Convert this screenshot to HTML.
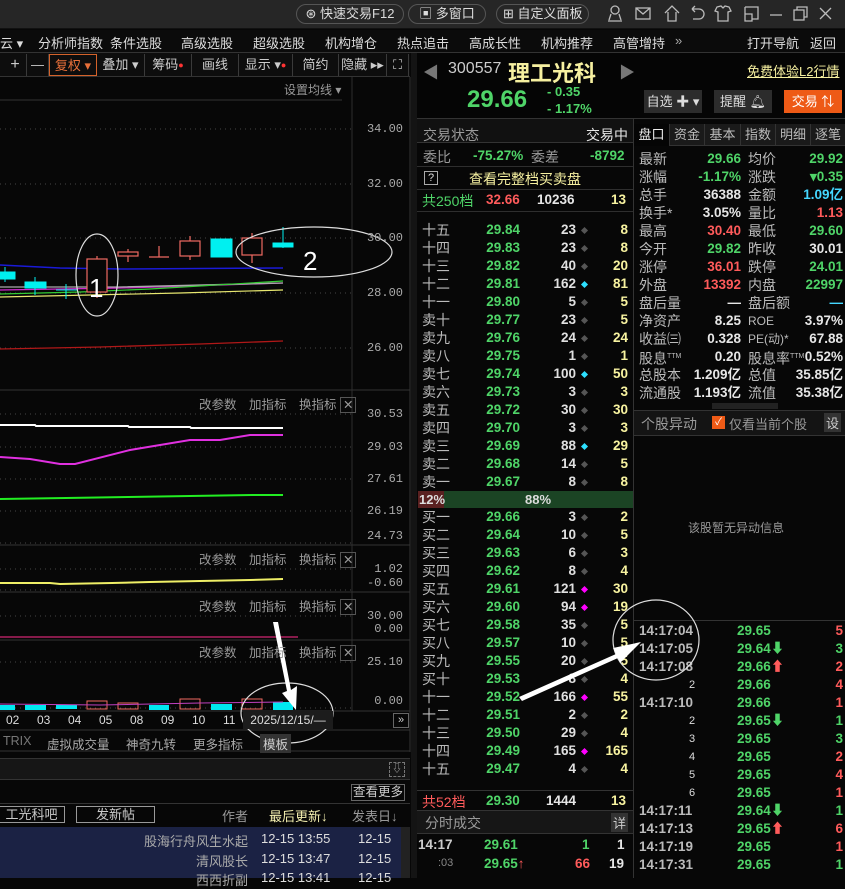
<!DOCTYPE html>
<html><head><meta charset="utf-8">
<style>
*{margin:0;padding:0;box-sizing:border-box}
body{width:845px;height:878px;background:#070707;overflow:hidden;position:relative;font-family:"Liberation Sans","Noto Sans CJK SC",sans-serif;font-size:13px;color:#ddd}
.a{position:absolute;white-space:nowrap}
.g{color:#4fd468}.r{color:#ff5b5b}.y{color:#f8f3a0}.w{color:#e6e6e6}.gr{color:#9a9a9a}.c{color:#45d7ff}
.n{font-weight:bold;font-size:13.5px}
.pill{position:absolute;top:4px;height:20px;border:1px solid #555;border-radius:10px;color:#ddd;font-size:13px;line-height:18px;padding:0 6px;white-space:nowrap;text-align:center}
.tb{position:absolute;top:54px;height:22px;border-right:1px solid #3a3a3a;line-height:22px;text-align:center;color:#ccc;white-space:nowrap}
.ib{position:absolute;font-size:12px;color:#999;white-space:nowrap}
.ax{position:absolute;font-size:12px;color:#aaa;right:442px;font-family:"Liberation Mono",monospace}
.ob{position:absolute;left:418px;width:214px;height:18px;line-height:18px}
.ob span{position:absolute}
.ob .l{left:4px;color:#bbb;font-size:14px}
.ob .p{right:112px;color:#4fd468;font-weight:bold;font-size:13.5px}
.ob .v{right:56px;color:#e0e0e0;font-weight:bold;font-size:13.5px}
.ob .d{left:164px;top:7px;width:5px;height:5px;transform:rotate(45deg);background:#555}
.ob .cn{right:4px;color:#f8f3a0;font-weight:bold;font-size:13.5px}
.st{position:absolute;left:634px;width:211px;height:18px;line-height:18px}
.st span{position:absolute;white-space:nowrap}
.st .l1{left:5px;color:#bbb;font-size:14px}.st .v1{right:104px;font-weight:bold;font-size:13.5px}
.st .l2{left:114px;color:#bbb;font-size:14px}.st .v2{right:2px;font-weight:bold;font-size:13.5px}
.tl{position:absolute;left:634px;width:211px;height:18px;line-height:18px;font-weight:bold;font-size:13.5px}
.tl span{position:absolute;white-space:nowrap}
.tl .t{left:5px;color:#bbb}.tl .tp{left:103px;color:#4fd468}.tl .k{right:2px}
.hl{position:absolute;height:1px;background:#2e2e2e}
.vl{position:absolute;width:1px;background:#2e2e2e}
</style></head><body>
<div class="a" style="left:0;top:0;width:845px;height:29px;background:#262626;border-bottom:1px solid #111"></div>
<div class="pill" style="left:296px;width:108px">⊛ 快速交易F12</div>
<div class="pill" style="left:408px;width:78px">▣ 多窗口</div>
<div class="pill" style="left:496px;width:93px">⊞ 自定义面板</div>
<svg class="a" style="left:600px;top:2px" width="245" height="24" fill="none" stroke="#bbb" stroke-width="1.3">
<circle cx="15" cy="8" r="4"/><path d="M8 19h14M11 12l-2 6M19 12l2 6"/>
<rect x="36" y="6" width="14" height="11"/><path d="M36 6l7 6 7-6"/>
<path d="M65 11l7-7 7 7M68 10v9h8v-9"/>
<path d="M92 7h7a5 5 0 010 10h-6M92 7l3-3M92 7l3 3"/>
<path d="M117 5l4-1 2 2 2-2 4 1 2 4-3 1v9h-10v-9l-3-1z"/>
<path d="M145 5h13v12h-6M145 5v14h7v-7h-7"/>
<path d="M170 13h12"/>
<rect x="194" y="8" width="10" height="10"/><path d="M197 8V5h10v10h-3"/>
<path d="M220 6l11 11M231 6l-11 11"/>
</svg>
<div class="a" style="left:0;top:30px;width:845px;height:23px;background:#0b0b0b;border-bottom:1px solid #333"></div>
<div class="a" style="top:33px;left:0;font-size:13px;color:#ddd">
<span class="a" style="left:0">云 ▾</span><span class="a" style="left:38px">分析师指数</span><span class="a" style="left:110px">条件选股</span><span class="a" style="left:181px">高级选股</span><span class="a" style="left:253px">超级选股</span><span class="a" style="left:325px">机构增仓</span><span class="a" style="left:397px">热点追击</span><span class="a" style="left:469px">高成长性</span><span class="a" style="left:541px">机构推荐</span><span class="a" style="left:613px">高管增持</span><span class="a" style="left:675px;color:#aaa">»</span><span class="a" style="left:747px">打开导航</span><span class="a" style="left:810px">返回</span></div>
<div class="a" style="left:0;top:53px;width:410px;height:24px;background:#0d0d0d;border-bottom:1px solid #333"></div>
<div class="tb" style="left:4px;width:23px;font-size:16px">+</div>
<div class="tb" style="left:27px;width:22px">—</div>
<div class="tb" style="left:49px;width:48px;border:1px solid #d4622a;color:#e8703a">复权 ▾</div>
<div class="tb" style="left:97px;width:48px">叠加 ▾</div>
<div class="tb" style="left:145px;width:47px">筹码<span style="color:#f33;font-size:9px;vertical-align:top">●</span></div>
<div class="tb" style="left:192px;width:47px">画线</div>
<div class="tb" style="left:239px;width:54px">显示 ▾<span style="color:#f33;font-size:9px;vertical-align:top">●</span></div>
<div class="tb" style="left:293px;width:46px">简约</div>
<div class="tb" style="left:339px;width:48px">隐藏 ▸▸</div>
<div class="tb" style="left:387px;width:22px">⛶</div>
<svg class="a" style="left:0;top:77px" width="412" height="675">
<g transform="translate(0,-77)">
<line x1="0" y1="100" x2="342" y2="100" stroke="#333"/>
<line x1="352" y1="77" x2="352" y2="711" stroke="#2c2c2c"/>
<line x1="410" y1="53" x2="410" y2="878" stroke="#333"/>
<g stroke="#444" stroke-dasharray="1 4">
<line x1="0" y1="129" x2="352" y2="129"/><line x1="0" y1="184" x2="352" y2="184"/><line x1="0" y1="238" x2="352" y2="238"/><line x1="0" y1="293" x2="352" y2="293"/><line x1="0" y1="348" x2="352" y2="348"/>
<line x1="0" y1="414" x2="352" y2="414"/><line x1="0" y1="447" x2="352" y2="447"/><line x1="0" y1="479" x2="352" y2="479"/><line x1="0" y1="511" x2="352" y2="511"/><line x1="0" y1="543" x2="352" y2="543"/>
<line x1="0" y1="569" x2="352" y2="569"/><line x1="0" y1="590" x2="352" y2="590"/>
<line x1="0" y1="616" x2="352" y2="616"/><line x1="0" y1="662" x2="352" y2="662"/><line x1="0" y1="708" x2="352" y2="708"/>
</g>
<g stroke="#333"><line x1="0" y1="390" x2="410" y2="390"/><line x1="0" y1="545" x2="410" y2="545"/><line x1="0" y1="592" x2="410" y2="592"/><line x1="0" y1="640" x2="410" y2="640"/><line x1="0" y1="711" x2="410" y2="711"/><line x1="0" y1="730" x2="410" y2="730"/><line x1="0" y1="751" x2="410" y2="751"/></g>
<polyline points="0,265 40,267 60,268 120,269 283,268" stroke="#1a1ad8" stroke-width="1.5" fill="none"/>
<polyline points="0,290 120,288 190,286 283,283" stroke="#d028d0" stroke-width="1.3" fill="none"/>
<polyline points="0,287 90,287 120,287 283,283" stroke="#aaa" stroke-width="1.3" fill="none"/>
<polyline points="0,294 80,292 150,289 283,281" stroke="#3c3" stroke-width="1.2" fill="none"/>
<polyline points="0,297 90,295 180,293 283,290" stroke="#e8e870" stroke-width="1.2" fill="none"/>
<polyline points="0,349 100,347 200,344 283,341" stroke="#b01818" stroke-width="1.3" fill="none"/>
<g fill="#00f0f0" stroke="#00f0f0"><line x1="5" y1="267" x2="5" y2="282"/><rect x="0" y="272" width="15" height="7"/>
<line x1="35" y1="277" x2="35" y2="295"/><rect x="25" y="282" width="21" height="6"/>
<line x1="66" y1="284" x2="66" y2="299"/><line x1="56" y1="290" x2="77" y2="290"/>
<rect x="211" y="239" width="21" height="18"/>
<line x1="283" y1="227" x2="283" y2="248"/><rect x="273" y="243" width="20" height="4"/></g>
<g fill="none" stroke="#f06a62" stroke-width="1.2"><line x1="97" y1="256" x2="97" y2="298"/><rect x="87" y="259" width="20" height="33" fill="#070707"/>
<line x1="128" y1="249" x2="128" y2="262"/><rect x="118" y="252" width="20" height="4" fill="#070707"/>
<line x1="159" y1="246" x2="159" y2="257"/><line x1="149" y1="257" x2="169" y2="257"/>
<line x1="190" y1="236" x2="190" y2="260"/><rect x="180" y="241" width="20" height="15" fill="#070707"/>
<line x1="252" y1="233" x2="252" y2="263"/><rect x="242" y="238" width="20" height="17" fill="#070707"/></g>
<polyline points="0,425 35,425 36,426 128,426 129,427 190,427 191,428 283,428" stroke="#fff" stroke-width="2" fill="none"/>
<polyline points="0,457 30,459 60,464 75,464 130,450 190,440 220,440 250,435 283,435" stroke="#e030e0" stroke-width="2" fill="none"/>
<polyline points="0,499 66,498 128,497 190,496 252,495 283,495" stroke="#2e2" stroke-width="2" fill="none"/>
<polyline points="0,583 50,583 60,584 112,583 150,582 200,581 250,580 283,579" stroke="#ee6" stroke-width="2" fill="none"/>
<line x1="0" y1="637" x2="298" y2="637" stroke="#b02060" stroke-width="1.5"/>
<g fill="#00e8f0"><rect x="0" y="705" width="15" height="5"/><rect x="25" y="705" width="21" height="5"/><rect x="56" y="705" width="21" height="4"/><rect x="149" y="705" width="20" height="5"/><rect x="211" y="704" width="21" height="6"/><rect x="273" y="702" width="20" height="8"/></g>
<g fill="none" stroke="#f06a62"><rect x="87" y="701" width="20" height="8"/><rect x="118" y="703" width="20" height="6"/><rect x="180" y="699" width="20" height="10"/><rect x="242" y="699" width="20" height="10"/></g>
<polyline points="0,704 100,705 200,703 283,702" stroke="#c040c0" fill="none"/>
<g fill="none" stroke="#ddd" stroke-width="1.2"><ellipse cx="97" cy="275" rx="21" ry="41"/><ellipse cx="314" cy="252" rx="78" ry="25"/><ellipse cx="287" cy="713" rx="46" ry="30"/></g>
<text x="89" y="297" fill="#fff" font-size="26" font-family="Liberation Sans">1</text>
<text x="303" y="270" fill="#fff" font-size="26" font-family="Liberation Sans">2</text>
<polygon points="273,622 278,622 291,690 297,686 296,710 282,693 287,691" fill="#fff"/>
</g></svg>
<div class="ib" style="left:284px;top:81px">设置均线 ▾</div>
<div class="ax" style="top:122px">34.00</div><div class="ax" style="top:177px">32.00</div><div class="ax" style="top:231px">30.00</div><div class="ax" style="top:286px">28.00</div><div class="ax" style="top:341px">26.00</div>
<div class="ax" style="top:407px">30.53</div><div class="ax" style="top:440px">29.03</div><div class="ax" style="top:472px">27.61</div><div class="ax" style="top:504px">26.19</div><div class="ax" style="top:529px">24.73</div>
<div class="ax" style="top:562px">1.02</div><div class="ax" style="top:576px">-0.60</div>
<div class="ax" style="top:609px">30.00</div><div class="ax" style="top:622px">0.00</div>
<div class="ax" style="top:655px">25.10</div><div class="ax" style="top:694px">0.00</div>
<div class="ib" style="left:199px;top:394px;font-size:12.5px">改参数　加指标　换指标 <span style="border:1px solid #555;padding:0 2px">✕</span></div>
<div class="ib" style="left:199px;top:549px;font-size:12.5px">改参数　加指标　换指标 <span style="border:1px solid #555;padding:0 2px">✕</span></div>
<div class="ib" style="left:199px;top:596px;font-size:12.5px">改参数　加指标　换指标 <span style="border:1px solid #555;padding:0 2px">✕</span></div>
<div class="ib" style="left:199px;top:642px;font-size:12.5px">改参数　加指标　换指标 <span style="border:1px solid #555;padding:0 2px">✕</span></div>
<div class="a" style="top:713px;left:0;font-size:12px;color:#ddd"><span class="a" style="left:6px">02</span><span class="a" style="left:37px">03</span><span class="a" style="left:68px">04</span><span class="a" style="left:99px">05</span><span class="a" style="left:130px">08</span><span class="a" style="left:161px">09</span><span class="a" style="left:192px">10</span><span class="a" style="left:223px">11</span></div>
<div class="a" style="left:243px;top:711px;width:90px;height:18px;background:#1c1c1c;color:#ddd;font-size:12px;line-height:18px;text-align:center">2025/12/15/—</div>
<div class="a" style="left:393px;top:713px;width:16px;height:15px;border:1px solid #666;color:#ccc;font-size:11px;line-height:13px;text-align:center">»</div>
<div class="a" style="top:734px;left:0;font-size:12.5px;color:#aaa"><span class="a" style="left:3px;color:#777">TRIX</span><span class="a" style="left:47px">虚拟成交量</span><span class="a" style="left:126px">神奇九转</span><span class="a" style="left:193px">更多指标</span><span class="a" style="left:260px;background:#333;color:#ccc;padding:0 3px">模板</span></div>
<div class="a" style="left:0;top:758px;width:410px;height:22px;background:#161616;border-top:1px solid #333;border-bottom:1px solid #333"></div>
<div class="a" style="left:389px;top:762px;width:16px;height:15px;border:1px dashed #777;color:#aaa;font-size:10px;text-align:center;line-height:13px">⇩</div>
<div class="a" style="left:351px;top:784px;width:54px;height:17px;border:1px solid #666;color:#ccc;font-size:12.5px;line-height:15px;text-align:center">查看更多</div>
<div class="a" style="left:0;top:803px;width:410px;height:1px;background:#333"></div>
<div class="a" style="left:-2px;top:806px;width:67px;height:17px;border:1px solid #999;color:#ccc;font-size:13px;line-height:15px;text-align:center">工光科吧</div>
<div class="a" style="left:76px;top:806px;width:79px;height:17px;border:1px solid #999;color:#ccc;font-size:13px;line-height:15px;text-align:center">发新帖</div>
<div class="a" style="left:222px;top:806px;color:#999;font-size:13px">作者</div>
<div class="a" style="left:269px;top:806px;color:#f4f0b0;font-size:13px">最后更新↓</div>
<div class="a" style="left:352px;top:806px;color:#999;font-size:13px">发表日↓</div>
<div class="a" style="left:0;top:827px;width:401px;height:51px;background:#1b2244"></div>
<div class="a" style="left:401px;top:827px;width:9px;height:51px;background:#222"></div>
<div class="a" style="top:831px;left:0;font-size:13px;color:#aaa;width:410px">
<span class="a" style="right:162px">股海行舟风生水起</span><span class="a" style="left:261px;color:#ddd">12-15 13:55</span><span class="a" style="left:358px;color:#ddd">12-15</span></div>
<div class="a" style="top:851px;left:0;font-size:13px;color:#aaa;width:410px">
<span class="a" style="right:162px">清风股长</span><span class="a" style="left:261px;color:#ddd">12-15 13:47</span><span class="a" style="left:358px;color:#ddd">12-15</span></div>
<div class="a" style="top:870px;left:0;font-size:13px;color:#aaa;width:410px">
<span class="a" style="right:162px">西西折副</span><span class="a" style="left:261px;color:#ddd">12-15 13:41</span><span class="a" style="left:358px;color:#ddd">12-15</span></div>
<div class="a" style="left:411px;top:53px;width:6px;height:825px;background:#141414"></div>
<div class="a" style="left:417px;top:53px;width:428px;height:66px;background:#050505;border-bottom:1px solid #333"></div>
<div class="a" style="left:423px;top:59px;color:#777;font-size:16px">◀</div>
<div class="a" style="left:448px;top:60px;color:#ccc;font-size:16px">300557</div>
<div class="a" style="left:508px;top:56px;color:#f6f0a0;font-size:22px;font-weight:bold">理工光科</div>
<div class="a" style="left:619px;top:59px;color:#777;font-size:16px">▶</div>
<div class="a" style="left:747px;top:61px;color:#f6f0a0;font-size:13px;text-decoration:underline">免费体验L2行情</div>
<div class="a g" style="left:467px;top:86px;font-size:24px;font-weight:bold">29.66</div>
<div class="a g" style="left:547px;top:84px;font-size:13px;font-weight:bold">- 0.35</div>
<div class="a g" style="left:547px;top:101px;font-size:13px;font-weight:bold">- 1.17%</div>
<div class="a" style="left:644px;top:90px;width:58px;height:23px;background:#2c2c2c;color:#ddd;line-height:23px;text-align:center">自选 ✚ ▾</div>
<div class="a" style="left:714px;top:90px;width:58px;height:23px;background:#2c2c2c;color:#ddd;line-height:23px;text-align:center">提醒 🔔︎</div>
<div class="a" style="left:784px;top:90px;width:58px;height:23px;background:#ee5a16;color:#fff;line-height:23px;text-align:center">交易 ⇅</div>
<div class="vl" style="left:633px;top:119px;height:759px;background:#333"></div>
<div class="a" style="left:417px;top:119px;width:216px;height:24px;background:#111;border-bottom:1px solid #333"></div>
<div class="a gr" style="left:423px;top:125px;font-size:14px">交易状态</div>
<div class="a w" style="left:586px;top:125px;font-size:14px">交易中</div>
<div class="a gr" style="left:423px;top:147px;font-size:14px">委比</div>
<div class="a g n" style="left:473px;top:148px">-75.27%</div>
<div class="a gr" style="left:531px;top:147px;font-size:14px">委差</div>
<div class="a g n" style="left:590px;top:148px">-8792</div>
<div class="hl" style="left:417px;top:166px;width:216px"></div>
<div class="a" style="left:424px;top:171px;width:14px;height:14px;border:1px solid #aaa;font-size:11px;line-height:12px;text-align:center;color:#ddd">?</div>
<div class="a" style="left:469px;top:169px;color:#f6f0a0;font-size:14px">查看完整档买卖盘</div>
<div class="hl" style="left:417px;top:189px;width:216px"></div>
<div class="a g" style="left:422px;top:191px;font-size:14px">共250档</div>
<div class="a r n" style="left:486px;top:192px">32.66</div>
<div class="a w n" style="left:537px;top:192px">10236</div>
<div class="a y n" style="left:611px;top:192px">13</div>
<div class="hl" style="left:417px;top:211px;width:216px"></div>
<div class="ob" style="top:221px"><span class="l">十五</span><span class="p">29.84</span><span class="v">23</span><span class="d"></span><span class="cn">8</span></div>
<div class="ob" style="top:239px"><span class="l">十四</span><span class="p">29.83</span><span class="v">23</span><span class="d"></span><span class="cn">8</span></div>
<div class="ob" style="top:257px"><span class="l">十三</span><span class="p">29.82</span><span class="v">40</span><span class="d"></span><span class="cn">20</span></div>
<div class="ob" style="top:275px"><span class="l">十二</span><span class="p">29.81</span><span class="v">162</span><span class="d" style="background:#2de0ff"></span><span class="cn">81</span></div>
<div class="ob" style="top:293px"><span class="l">十一</span><span class="p">29.80</span><span class="v">5</span><span class="d"></span><span class="cn">5</span></div>
<div class="ob" style="top:311px"><span class="l">卖十</span><span class="p">29.77</span><span class="v">23</span><span class="d"></span><span class="cn">5</span></div>
<div class="ob" style="top:329px"><span class="l">卖九</span><span class="p">29.76</span><span class="v">24</span><span class="d"></span><span class="cn">24</span></div>
<div class="ob" style="top:347px"><span class="l">卖八</span><span class="p">29.75</span><span class="v">1</span><span class="d"></span><span class="cn">1</span></div>
<div class="ob" style="top:365px"><span class="l">卖七</span><span class="p">29.74</span><span class="v">100</span><span class="d" style="background:#2de0ff"></span><span class="cn">50</span></div>
<div class="ob" style="top:383px"><span class="l">卖六</span><span class="p">29.73</span><span class="v">3</span><span class="d"></span><span class="cn">3</span></div>
<div class="ob" style="top:401px"><span class="l">卖五</span><span class="p">29.72</span><span class="v">30</span><span class="d"></span><span class="cn">30</span></div>
<div class="ob" style="top:419px"><span class="l">卖四</span><span class="p">29.70</span><span class="v">3</span><span class="d"></span><span class="cn">3</span></div>
<div class="ob" style="top:437px"><span class="l">卖三</span><span class="p">29.69</span><span class="v">88</span><span class="d" style="background:#2de0ff"></span><span class="cn">29</span></div>
<div class="ob" style="top:455px"><span class="l">卖二</span><span class="p">29.68</span><span class="v">14</span><span class="d"></span><span class="cn">5</span></div>
<div class="ob" style="top:473px"><span class="l">卖一</span><span class="p">29.67</span><span class="v">8</span><span class="d"></span><span class="cn">8</span></div>
<div class="a" style="left:418px;top:491px;width:215px;height:17px;background:#1b4424"></div>
<div class="a" style="left:418px;top:491px;width:26px;height:17px;background:#5a2020"></div>
<div class="a" style="left:419px;top:491px;color:#ddd;font-weight:bold;line-height:17px">12%</div>
<div class="a" style="left:525px;top:491px;color:#ddd;font-weight:bold;line-height:17px">88%</div>
<div class="ob" style="top:508px"><span class="l">买一</span><span class="p">29.66</span><span class="v">3</span><span class="d"></span><span class="cn">2</span></div>
<div class="ob" style="top:526px"><span class="l">买二</span><span class="p">29.64</span><span class="v">10</span><span class="d"></span><span class="cn">5</span></div>
<div class="ob" style="top:544px"><span class="l">买三</span><span class="p">29.63</span><span class="v">6</span><span class="d"></span><span class="cn">3</span></div>
<div class="ob" style="top:562px"><span class="l">买四</span><span class="p">29.62</span><span class="v">8</span><span class="d"></span><span class="cn">4</span></div>
<div class="ob" style="top:580px"><span class="l">买五</span><span class="p">29.61</span><span class="v">121</span><span class="d" style="background:#f0f"></span><span class="cn">30</span></div>
<div class="ob" style="top:598px"><span class="l">买六</span><span class="p">29.60</span><span class="v">94</span><span class="d" style="background:#f0f"></span><span class="cn">19</span></div>
<div class="ob" style="top:616px"><span class="l">买七</span><span class="p">29.58</span><span class="v">35</span><span class="d"></span><span class="cn">5</span></div>
<div class="ob" style="top:634px"><span class="l">买八</span><span class="p">29.57</span><span class="v">10</span><span class="d"></span><span class="cn">5</span></div>
<div class="ob" style="top:652px"><span class="l">买九</span><span class="p">29.55</span><span class="v">20</span><span class="d"></span><span class="cn">5</span></div>
<div class="ob" style="top:670px"><span class="l">买十</span><span class="p">29.53</span><span class="v">8</span><span class="d"></span><span class="cn">4</span></div>
<div class="ob" style="top:688px"><span class="l">十一</span><span class="p">29.52</span><span class="v">166</span><span class="d" style="background:#f0f"></span><span class="cn">55</span></div>
<div class="ob" style="top:706px"><span class="l">十二</span><span class="p">29.51</span><span class="v">2</span><span class="d"></span><span class="cn">2</span></div>
<div class="ob" style="top:724px"><span class="l">十三</span><span class="p">29.50</span><span class="v">29</span><span class="d"></span><span class="cn">4</span></div>
<div class="ob" style="top:742px"><span class="l">十四</span><span class="p">29.49</span><span class="v">165</span><span class="d" style="background:#f0f"></span><span class="cn">165</span></div>
<div class="ob" style="top:760px"><span class="l">十五</span><span class="p">29.47</span><span class="v">4</span><span class="d"></span><span class="cn">4</span></div>
<div class="hl" style="left:417px;top:790px;width:216px;background:#333"></div>
<div class="a r" style="left:422px;top:792px;font-size:14px">共52档</div>
<div class="a g n" style="left:486px;top:793px">29.30</div>
<div class="a w n" style="left:546px;top:793px">1444</div>
<div class="a y n" style="left:611px;top:793px">13</div>
<div class="a" style="left:417px;top:810px;width:216px;height:24px;background:#161616;border-top:1px solid #333;border-bottom:1px solid #333"></div>
<div class="a gr" style="left:425px;top:813px;font-size:14px">分时成交</div>
<div class="a" style="left:611px;top:813px;background:#333;color:#ccc;font-size:13px;padding:0 2px">详</div>
<div class="a n" style="left:418px;top:837px;color:#ccc">14:17</div>
<div class="a g n" style="left:484px;top:837px">29.61</div>
<div class="a g n" style="left:582px;top:837px">1</div>
<div class="a w n" style="left:617px;top:837px">1</div>
<div class="a" style="left:438px;top:857px;color:#888;font-size:11px">:03</div>
<div class="a g n" style="left:484px;top:856px">29.65<span class="r">↑</span></div>
<div class="a r n" style="left:575px;top:856px">66</div>
<div class="a w n" style="left:609px;top:856px">19</div>
<div class="a" style="left:634px;top:124px;width:211px;height:22px;background:#1a1a1a;border-bottom:1px solid #333"></div>
<div class="a" style="left:634px;top:124px;font-size:13px;line-height:22px;color:#bbb">
<span class="a" style="left:0;width:35px;text-align:center;background:#050505;color:#eee">盘口</span><span class="a" style="left:35px;width:35px;text-align:center;border-left:1px solid #333">资金</span><span class="a" style="left:70px;width:36px;text-align:center;border-left:1px solid #333">基本</span><span class="a" style="left:106px;width:35px;text-align:center;border-left:1px solid #333">指数</span><span class="a" style="left:141px;width:35px;text-align:center;border-left:1px solid #333">明细</span><span class="a" style="left:176px;width:35px;text-align:center;border-left:1px solid #333">逐笔</span></div>
<div class="st" style="top:150px"><span class="l1">最新</span><span class="v1 g">29.66</span><span class="l2">均价</span><span class="v2 g">29.92</span></div>
<div class="st" style="top:168px"><span class="l1">涨幅</span><span class="v1 g">-1.17%</span><span class="l2">涨跌</span><span class="v2 g">▾0.35</span></div>
<div class="st" style="top:186px"><span class="l1">总手</span><span class="v1 w">36388</span><span class="l2">金额</span><span class="v2 c">1.09亿</span></div>
<div class="st" style="top:204px"><span class="l1">换手*</span><span class="v1 w">3.05%</span><span class="l2">量比</span><span class="v2 r">1.13</span></div>
<div class="st" style="top:222px"><span class="l1">最高</span><span class="v1 r">30.40</span><span class="l2">最低</span><span class="v2 g">29.60</span></div>
<div class="st" style="top:240px"><span class="l1">今开</span><span class="v1 g">29.82</span><span class="l2">昨收</span><span class="v2 w">30.01</span></div>
<div class="st" style="top:258px"><span class="l1">涨停</span><span class="v1 r">36.01</span><span class="l2">跌停</span><span class="v2 g">24.01</span></div>
<div class="st" style="top:276px"><span class="l1">外盘</span><span class="v1 r">13392</span><span class="l2">内盘</span><span class="v2 g">22997</span></div>
<div class="st" style="top:294px"><span class="l1">盘后量</span><span class="v1 w">—</span><span class="l2">盘后额</span><span class="v2 c">—</span></div>
<div class="st" style="top:312px"><span class="l1">净资产</span><span class="v1 w">8.25</span><span class="l2" style="font-size:12px">ROE</span><span class="v2 w">3.97%</span></div>
<div class="st" style="top:330px"><span class="l1">收益㈢</span><span class="v1 w">0.328</span><span class="l2" style="font-size:12px">PE(动)*</span><span class="v2 w">67.88</span></div>
<div class="st" style="top:348px"><span class="l1">股息<sup style="font-size:7px">TTM</sup></span><span class="v1 w">0.20</span><span class="l2">股息率<sup style="font-size:7px">TTM</sup></span><span class="v2 w">0.52%</span></div>
<div class="st" style="top:366px"><span class="l1">总股本</span><span class="v1 w">1.209亿</span><span class="l2">总值</span><span class="v2 w">35.85亿</span></div>
<div class="st" style="top:384px"><span class="l1">流通股</span><span class="v1 w">1.193亿</span><span class="l2">流值</span><span class="v2 w">35.38亿</span></div>
<div class="a" style="left:712px;top:403px;width:66px;height:6px;background:#222"></div>
<div class="a" style="left:634px;top:410px;width:211px;height:26px;background:#141414;border-top:1px solid #333;border-bottom:1px solid #333"></div>
<div class="a gr" style="left:641px;top:414px;font-size:14px">个股异动</div>
<div class="a" style="left:712px;top:416px;width:13px;height:13px;background:#ee5a16;color:#fff;font-size:10px;line-height:13px;text-align:center">✓</div>
<div class="a gr" style="left:729px;top:414px;font-size:13px">仅看当前个股</div>
<div class="a" style="left:824px;top:413px;background:#333;color:#ccc;font-size:13px;padding:0 2px">设</div>
<div class="a gr" style="left:688px;top:519px;font-size:12px">该股暂无异动信息</div>
<div class="hl" style="left:634px;top:620px;width:211px;background:#333"></div>
<div class="tl" style="top:622px"><span class="t">14:17:04</span><span class="tp">29.65</span><span class="k r">5</span></div>
<div class="tl" style="top:640px"><span class="t">14:17:05</span><span class="tp">29.64<span class="g">⬇</span></span><span class="k g">3</span></div>
<div class="tl" style="top:658px"><span class="t">14:17:08</span><span class="tp">29.66<span class="r">⬆</span></span><span class="k r">2</span></div>
<div class="tl" style="top:676px"><span class="t" style="left:55px;font-size:11px;color:#ddd;font-weight:normal">2</span><span class="tp">29.66</span><span class="k r">4</span></div>
<div class="tl" style="top:694px"><span class="t">14:17:10</span><span class="tp">29.66</span><span class="k r">1</span></div>
<div class="tl" style="top:712px"><span class="t" style="left:55px;font-size:11px;color:#ddd;font-weight:normal">2</span><span class="tp">29.65<span class="g">⬇</span></span><span class="k g">1</span></div>
<div class="tl" style="top:730px"><span class="t" style="left:55px;font-size:11px;color:#ddd;font-weight:normal">3</span><span class="tp">29.65</span><span class="k g">3</span></div>
<div class="tl" style="top:748px"><span class="t" style="left:55px;font-size:11px;color:#ddd;font-weight:normal">4</span><span class="tp">29.65</span><span class="k r">2</span></div>
<div class="tl" style="top:766px"><span class="t" style="left:55px;font-size:11px;color:#ddd;font-weight:normal">5</span><span class="tp">29.65</span><span class="k r">4</span></div>
<div class="tl" style="top:784px"><span class="t" style="left:55px;font-size:11px;color:#ddd;font-weight:normal">6</span><span class="tp">29.65</span><span class="k r">1</span></div>
<div class="tl" style="top:802px"><span class="t">14:17:11</span><span class="tp">29.64<span class="g">⬇</span></span><span class="k g">1</span></div>
<div class="tl" style="top:820px"><span class="t">14:17:13</span><span class="tp">29.65<span class="r">⬆</span></span><span class="k r">6</span></div>
<div class="tl" style="top:838px"><span class="t">14:17:19</span><span class="tp">29.65</span><span class="k r">1</span></div>
<div class="tl" style="top:856px"><span class="t">14:17:31</span><span class="tp">29.65</span><span class="k g">1</span></div>
<svg class="a" style="left:500px;top:590px" width="200" height="120">
<ellipse cx="156" cy="50" rx="43" ry="40" fill="none" stroke="#ddd" stroke-width="1.2"/>
<polygon points="19,107 116,64 113,58 141,52 120,73 118,68 22,111" fill="#fff"/>
</svg>
</body></html>
